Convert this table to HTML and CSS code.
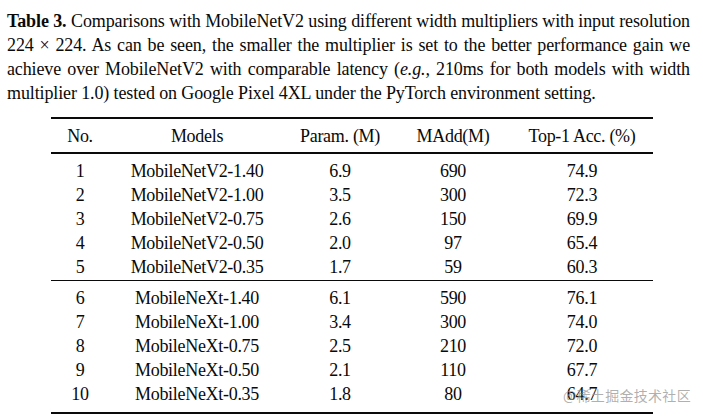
FILE: index.html
```html
<!DOCTYPE html>
<html>
<head>
<meta charset="utf-8">
<link rel="stylesheet" href="styles.css">
</head>
<body>
<div class="page">
  <p class="caption">
    <span class="line"><b>Table 3.</b> Comparisons with MobileNetV2 using different width multipliers with input resolution</span>
    <span class="line">224 × 224. As can be seen, the smaller the multiplier is set to the better performance gain we</span>
    <span class="line">achieve over MobileNetV2 with comparable latency (<i>e.g.,</i> 210ms for both models with width</span>
    <span class="line end">multiplier 1.0) tested on Google Pixel 4XL under the PyTorch environment setting.</span>
  </p>
  <table class="results">
    <colgroup>
      <col class="c-no"><col class="c-model"><col class="c-param"><col class="c-madd"><col class="c-acc">
    </colgroup>
    <thead>
      <tr><th>No.</th><th>Models</th><th>Param. (M)</th><th>MAdd(M)</th><th>Top-1 Acc. (%)</th></tr>
    </thead>
    <tbody class="group">
      <tr class="first"><td>1</td><td>MobileNetV2-1.40</td><td>6.9</td><td>690</td><td>74.9</td></tr>
      <tr><td>2</td><td>MobileNetV2-1.00</td><td>3.5</td><td>300</td><td>72.3</td></tr>
      <tr><td>3</td><td>MobileNetV2-0.75</td><td>2.6</td><td>150</td><td>69.9</td></tr>
      <tr><td>4</td><td>MobileNetV2-0.50</td><td>2.0</td><td>97</td><td>65.4</td></tr>
      <tr class="last"><td>5</td><td>MobileNetV2-0.35</td><td>1.7</td><td>59</td><td>60.3</td></tr>
    </tbody>
    <tbody class="group second">
      <tr class="first"><td>6</td><td>MobileNeXt-1.40</td><td>6.1</td><td>590</td><td>76.1</td></tr>
      <tr><td>7</td><td>MobileNeXt-1.00</td><td>3.4</td><td>300</td><td>74.0</td></tr>
      <tr><td>8</td><td>MobileNeXt-0.75</td><td>2.5</td><td>210</td><td>72.0</td></tr>
      <tr><td>9</td><td>MobileNeXt-0.50</td><td>2.1</td><td>110</td><td>67.7</td></tr>
      <tr class="last"><td>10</td><td>MobileNeXt-0.35</td><td>1.8</td><td>80</td><td>64.7</td></tr>
    </tbody>
  </table>
  <div class="watermark">@稀土掘金技术社区</div>
</div>
</body>
</html>
```
FILE: styles.css
```css
html, body {
  margin: 0;
  padding: 0;
  background: #ffffff;
}
.page {
  position: relative;
  width: 703px;
  height: 418px;
  overflow: hidden;
  font-family: "Liberation Serif", "Times New Roman", serif;
  color: #0a0a0a;
}
.caption {
  margin: 0;
  padding: 9px 13px 0 7px;
  font-size: 18px;
  line-height: 24px;
  letter-spacing: -0.12px;
}
.caption .line {
  display: block;
  white-space: nowrap;
  text-align: justify;
  text-align-last: justify;
}
.caption .line.end {
  text-align-last: left;
}
.caption b {
  font-weight: bold;
}
.results {
  margin: 12px 0 0 51px;
  width: 602px;
  border-collapse: collapse;
  font-size: 18px;
  letter-spacing: -0.3px;
}
.c-no { width: 58px; }
.c-model { width: 176px; }
.c-param { width: 110px; }
.c-madd { width: 116px; }
.c-acc { width: 142px; }
.results th, .results td {
  padding: 0;
  text-align: center;
  font-weight: normal;
  height: 24px;
  line-height: 24px;
}
.results thead tr {
  border-top: 2px solid #0a0a0a;
  border-bottom: 2px solid #0a0a0a;
}
.results thead th {
  height: 33px;
}
.results tr.first td {
  padding-top: 5px;
}
.results tr.last td {
  padding-bottom: 1px;
}
.results tbody.second {
  border-top: 1px solid #0a0a0a;
  border-bottom: 2px solid #0a0a0a;
}
.results tbody.second tr.last td {
  padding-bottom: 6px;
}
.watermark {
  position: absolute;
  left: 563px;
  top: 385px;
  font-family: "Noto Sans CJK SC", sans-serif;
  font-size: 14px;
  line-height: 20px;
  color: rgba(150, 150, 150, 0.75);
  letter-spacing: 0.3px;
}
```
